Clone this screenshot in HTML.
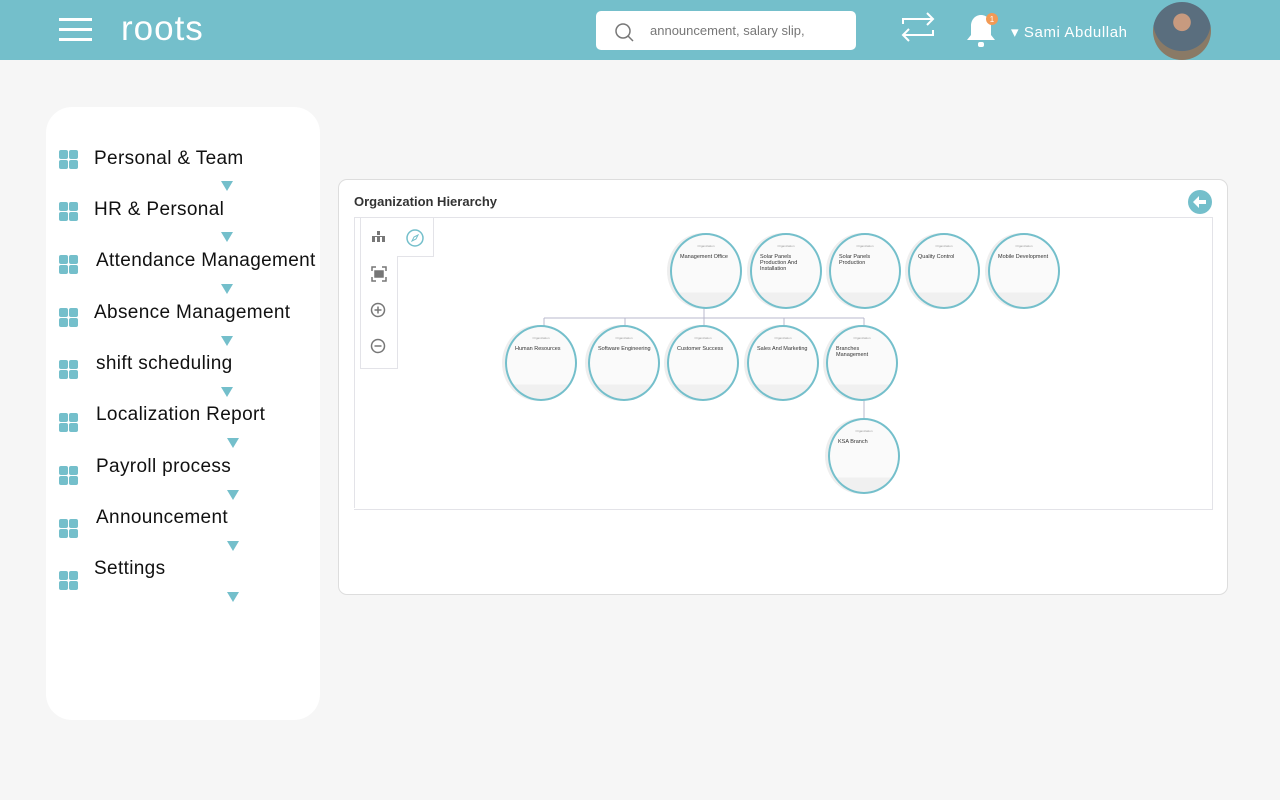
<!DOCTYPE html>
<html><head><style>
body{margin:0;width:1280px;height:800px;background:#f6f6f6;font-family:"Liberation Sans",sans-serif;position:relative;overflow:hidden}
.top{position:absolute;left:0;top:0;width:1280px;height:60px;background:#74bfcb}
.abs{position:absolute}
.side{position:absolute;left:46px;top:107px;width:274px;height:613px;background:#fff;border-radius:26px}
.item{position:absolute;font-size:19px;letter-spacing:0.35px;color:#111}
.ic{position:absolute;width:20px;height:20px}
.ic i{position:absolute;width:9px;height:9px;background:#74bfcb;border-radius:2px}
.tri{position:absolute;width:0;height:0;border-left:6px solid transparent;border-right:6px solid transparent;border-top:10px solid #74bfcb}
.panel{position:absolute;left:338px;top:179px;width:888px;height:414px;background:#fff;border:1px solid #ddd;border-radius:9px}
.c{position:absolute;width:68px;height:72px;border:2px solid #74bfcb;border-radius:50%;background:linear-gradient(#fafafa 80%,#f0f0f0 80%);box-shadow:-3px 0 0 #eee}
.c b{position:absolute;top:9px;left:0;right:0;text-align:center;font-size:3px;color:#999;font-weight:normal}
.c span{position:absolute;top:19px;left:8px;right:6px;font-size:5.5px;color:#333;line-height:6px}
</style></head><body>
<div class="top">
 <div class="abs" style="left:59px;top:18px;width:33px;height:3px;background:#fff"></div>
 <div class="abs" style="left:59px;top:28px;width:33px;height:3px;background:#fff"></div>
 <div class="abs" style="left:59px;top:38px;width:33px;height:3px;background:#fff"></div>
 <div class="abs" style="left:121px;top:9px;font-size:35px;letter-spacing:1px;color:#fff">roots</div>
 <div class="abs" style="left:596px;top:11px;width:260px;height:39px;background:#fff;border-radius:5px">
  <svg class="abs" style="left:18px;top:11px" width="22" height="22" viewBox="0 0 22 22"><circle cx="9" cy="9" r="7" fill="none" stroke="#777" stroke-width="1.5"/><line x1="14" y1="14" x2="19" y2="19" stroke="#777" stroke-width="1.5"/></svg>
  <div class="abs" style="left:54px;top:12px;font-size:13px;color:#777">announcement, salary slip,</div>
 </div>
 <svg class="abs" style="left:900px;top:10px" width="36" height="34" viewBox="0 0 36 34" fill="none" stroke="#fff" stroke-width="2"><path d="M3 14V9h30M27 3l6 6-6 6M33 20v5H3M9 31l-6-6 6-6"/></svg>
 <svg class="abs" style="left:963px;top:12px" width="36" height="38" viewBox="0 0 36 38"><path d="M18 3c-6 0-10 5-10 11v9l-4 5h28l-4-5v-9c0-6-4-11-10-11z" fill="#fff"/><rect x="15" y="30" width="6" height="5" rx="2" fill="#fff"/><circle cx="29" cy="7" r="6" fill="#f29a55"/><text x="29" y="10" font-size="8" fill="#fff" text-anchor="middle">1</text></svg>
 <div class="abs" style="left:1011px;top:23px;font-size:15px;letter-spacing:0.6px;color:#fff">▾ Sami Abdullah</div>
 <div class="abs" style="left:1153px;top:2px;width:58px;height:58px;border-radius:50%;background:radial-gradient(circle at 50% 35%,#c79a7f 0 18%,#5a6e7e 19% 60%,#8a7a66 61%)"></div>
</div>
<div class="side">
 <div class="ic" style="left:13px;top:43px"><i style="left:0;top:0"></i><i style="left:10px;top:0"></i><i style="left:0;top:10px"></i><i style="left:10px;top:10px"></i></div><div class="item" style="left:48px;top:41px">Personal &amp; Team</div><div class="tri" style="left:175px;top:74px"></div>
 <div class="ic" style="left:13px;top:95px"><i style="left:0;top:0"></i><i style="left:10px;top:0"></i><i style="left:0;top:10px"></i><i style="left:10px;top:10px"></i></div><div class="item" style="left:48px;top:92px">HR &amp; Personal</div><div class="tri" style="left:175px;top:125px"></div>
 <div class="ic" style="left:13px;top:148px"><i style="left:0;top:0"></i><i style="left:10px;top:0"></i><i style="left:0;top:10px"></i><i style="left:10px;top:10px"></i></div><div class="item" style="left:50px;top:143px">Attendance Management</div><div class="tri" style="left:175px;top:177px"></div>
 <div class="ic" style="left:13px;top:201px"><i style="left:0;top:0"></i><i style="left:10px;top:0"></i><i style="left:0;top:10px"></i><i style="left:10px;top:10px"></i></div><div class="item" style="left:48px;top:195px">Absence Management</div><div class="tri" style="left:175px;top:229px"></div>
 <div class="ic" style="left:13px;top:253px"><i style="left:0;top:0"></i><i style="left:10px;top:0"></i><i style="left:0;top:10px"></i><i style="left:10px;top:10px"></i></div><div class="item" style="left:50px;top:246px">shift scheduling</div><div class="tri" style="left:175px;top:280px"></div>
 <div class="ic" style="left:13px;top:306px"><i style="left:0;top:0"></i><i style="left:10px;top:0"></i><i style="left:0;top:10px"></i><i style="left:10px;top:10px"></i></div><div class="item" style="left:50px;top:297px">Localization Report</div><div class="tri" style="left:181px;top:331px"></div>
 <div class="ic" style="left:13px;top:359px"><i style="left:0;top:0"></i><i style="left:10px;top:0"></i><i style="left:0;top:10px"></i><i style="left:10px;top:10px"></i></div><div class="item" style="left:50px;top:349px">Payroll process</div><div class="tri" style="left:181px;top:383px"></div>
 <div class="ic" style="left:13px;top:412px"><i style="left:0;top:0"></i><i style="left:10px;top:0"></i><i style="left:0;top:10px"></i><i style="left:10px;top:10px"></i></div><div class="item" style="left:50px;top:400px">Announcement</div><div class="tri" style="left:181px;top:434px"></div>
 <div class="ic" style="left:13px;top:464px"><i style="left:0;top:0"></i><i style="left:10px;top:0"></i><i style="left:0;top:10px"></i><i style="left:10px;top:10px"></i></div><div class="item" style="left:48px;top:451px">Settings</div><div class="tri" style="left:181px;top:485px"></div>
</div>
<div class="panel">
 <div class="abs" style="left:15px;top:14px;font-size:13px;font-weight:bold;color:#333">Organization Hierarchy</div>
 <svg class="abs" style="left:848px;top:9px" width="26" height="26" viewBox="0 0 26 26"><circle cx="13" cy="13" r="12" fill="#74bfcb"/><path d="M6 13l6-6v4h7v4h-7v4z" fill="#fff"/></svg>
 <div class="abs" style="left:15px;top:37px;width:858px;height:291px;border:1px solid #e3e3e8;border-left:none"></div>
 <div class="abs" style="left:15px;top:37px;width:1px;height:291px;background:#e3e3e8"></div>
 <div class="abs" style="left:21px;top:38px;width:72px;height:38px;border:1px solid #e3e3e8;border-top:none;background:#fff"></div>
 <div class="abs" style="left:21px;top:76px;width:36px;height:112px;border-right:1px solid #e3e3e8;border-bottom:1px solid #e3e3e8;border-left:1px solid #e3e3e8;background:#fff"></div>
 <svg class="abs" style="left:32px;top:50px" width="16" height="16" viewBox="0 0 16 16" fill="#777"><rect x="6" y="1" width="3" height="4"/><rect x="1" y="7" width="3" height="5"/><rect x="6" y="7" width="3" height="5"/><rect x="11" y="7" width="3" height="5"/><rect x="1" y="6" width="13" height="1"/></svg>
 <svg class="abs" style="left:66px;top:48px" width="20" height="20" viewBox="0 0 20 20"><circle cx="10" cy="10" r="8" fill="none" stroke="#74bfcb" stroke-width="1.5"/><path d="M13 7l-2 4-4 2 2-4z" fill="none" stroke="#74bfcb"/></svg>
 <svg class="abs" style="left:32px;top:86px" width="16" height="16" viewBox="0 0 16 16" fill="none" stroke="#777" stroke-width="1.5"><path d="M1 5V1h4M11 1h4v4M15 11v4h-4M5 15H1v-4"/><rect x="4" y="5" width="8" height="6" fill="#777"/></svg>
 <svg class="abs" style="left:31px;top:122px" width="16" height="16" viewBox="0 0 16 16" fill="none" stroke="#777" stroke-width="1.5"><circle cx="8" cy="8" r="6.5"/><path d="M4.5 8h7M8 4.5v7"/></svg>
 <svg class="abs" style="left:31px;top:158px" width="16" height="16" viewBox="0 0 16 16" fill="none" stroke="#777" stroke-width="1.5"><circle cx="8" cy="8" r="6.5"/><path d="M4.5 8h7"/></svg>
 <svg class="abs" style="left:0;top:0" width="888" height="414" fill="none" stroke="#b8b8cc" stroke-width="1"><path d="M365 128v10M205 138h320M205 138v8M286 138v8M365 138v8M445 138v8M525 138v8M525 220v18"/></svg>
 <div class="c" style="left:331px;top:53px"><b>Organization</b><span>Management Office</span></div>
 <div class="c" style="left:411px;top:53px"><b>Organization</b><span>Solar Panels Production And Installation</span></div>
 <div class="c" style="left:490px;top:53px"><b>Organization</b><span>Solar Panels Production</span></div>
 <div class="c" style="left:569px;top:53px"><b>Organization</b><span>Quality Control</span></div>
 <div class="c" style="left:649px;top:53px"><b>Organization</b><span>Mobile Development</span></div>
 <div class="c" style="left:166px;top:145px"><b>Organization</b><span>Human Resources</span></div>
 <div class="c" style="left:249px;top:145px"><b>Organization</b><span>Software Engineering</span></div>
 <div class="c" style="left:328px;top:145px"><b>Organization</b><span>Customer Success</span></div>
 <div class="c" style="left:408px;top:145px"><b>Organization</b><span>Sales And Marketing</span></div>
 <div class="c" style="left:487px;top:145px"><b>Organization</b><span>Branches Management</span></div>
 <div class="c" style="left:489px;top:238px"><b>Organization</b><span>KSA Branch</span></div>
</div>
</body></html>
